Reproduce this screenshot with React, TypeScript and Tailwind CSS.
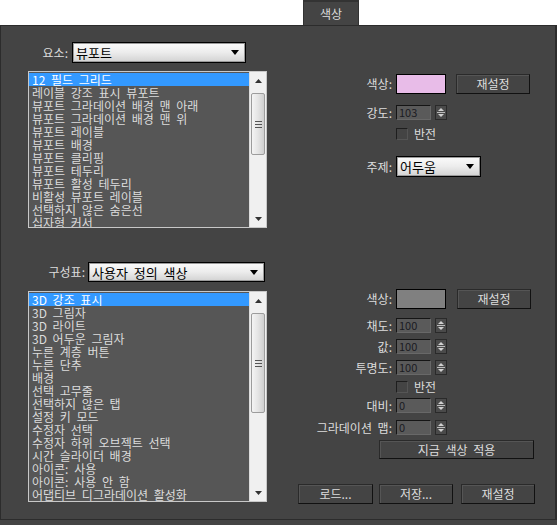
import React from "react";

const FONT = { fontFamily: '"Noto Sans CJK KR", "Noto Sans", sans-serif' };

function Dropdown({ text, w }: { text: string; w: string }) {
  return (
    <div
      className={`${w} h-full border border-black bg-gradient-to-b from-[#fbfbfb] via-[#ececec] to-[#d2d2d2] flex items-center justify-between pl-[3px] pr-[6px] shadow-[inset_0_0_0_1px_#9a9a9a]`}
    >
      <span className="text-[13px] leading-none text-black">{text}</span>
      <svg width="8" height="5" viewBox="0 0 8 5">
        <path d="M0 0 H8 L4 5 Z" fill="#000" />
      </svg>
    </div>
  );
}

function Scrollbar({ thumbTop, thumbH }: { thumbTop: number; thumbH: number }) {
  return (
    <div className="w-[17px] h-full bg-[#f0f0f0] border-l border-[#dcdcdc] flex flex-col shrink-0">
      <div className="h-[17px] flex items-center justify-center shrink-0">
        <svg width="7" height="4" viewBox="0 0 7 4">
          <path d="M0 4 H7 L3.5 0 Z" fill="#333" />
        </svg>
      </div>
      <div className="flex-1 flex flex-col px-[1px]">
        <div style={{ height: thumbTop }} className="shrink-0" />
        <div
          style={{ height: thumbH }}
          className="shrink-0 rounded-[2px] border border-[#9c9c9c] bg-gradient-to-r from-[#f4f4f4] via-[#e4e4e4] to-[#cfcfcf] flex flex-col items-center justify-center gap-[2px]"
        >
          <div className="w-[7px] h-[1px] bg-[#555]" />
          <div className="w-[7px] h-[1px] bg-[#555]" />
          <div className="w-[7px] h-[1px] bg-[#555]" />
        </div>
      </div>
      <div className="h-[17px] flex items-center justify-center shrink-0">
        <svg width="7" height="4" viewBox="0 0 7 4">
          <path d="M0 0 H7 L3.5 4 Z" fill="#333" />
        </svg>
      </div>
    </div>
  );
}

function ListBox({ items, h, thumbTop, thumbH }: { items: string[]; h: string; thumbTop: number; thumbH: number }) {
  return (
    <div className={`w-[239px] ${h} border border-[#c8c8c8] bg-[#565656] flex overflow-hidden`}>
      <div className="flex-1 flex flex-col overflow-hidden pt-[1px]">
        {items.map((t, i) => (
          <div
            key={i}
            className={`h-[13px] shrink-0 leading-[13px] text-[12px] pl-[3px] whitespace-nowrap ${
              i === 0 ? "bg-[#3399ff] text-white" : "text-[#dcdcdc]"
            }`}
          >
            {t}
          </div>
        ))}
      </div>
      <Scrollbar thumbTop={thumbTop} thumbH={thumbH} />
    </div>
  );
}

function Btn({ text, w, h = "h-[20px]" }: { text: string; w: string; h?: string }) {
  return (
    <div
      className={`${w} ${h} border border-t-[#2a2a2a] border-l-[#2a2a2a] border-b-[#111] border-r-[#111] bg-[#444] shadow-[inset_1px_1px_0_#555] flex items-center justify-center text-[12px] text-[#dcdcdc] shrink-0`}
    >
      {text}
    </div>
  );
}

function Spinner() {
  return (
    <div className="w-[12px] h-[15px] ml-[4px] border border-[#2a2a2a] bg-[#4a4a4a] flex flex-col items-center justify-center gap-[1px]">
      <svg width="6" height="3" viewBox="0 0 6 3">
        <path d="M0 3 H6 L3 0 Z" fill="#d0d0d0" />
      </svg>
      <div className="w-[8px] h-[1px] bg-[#bbb]" />
      <svg width="6" height="3" viewBox="0 0 6 3">
        <path d="M0 0 H6 L3 3 Z" fill="#d0d0d0" />
      </svg>
    </div>
  );
}

function Label({ text }: { text: string }) {
  return <div className="w-[98px] pr-[4px] text-right text-[12px] text-[#dcdcdc] leading-none shrink-0">{text}</div>;
}

function SpinRow({ label, value, mt }: { label: string; value: string; mt: string }) {
  return (
    <div className={`flex items-center h-[15px] ${mt}`}>
      <Label text={label} />
      <div className="w-[35px] h-[15px] bg-[#5a5a5a] border border-t-[#151515] border-l-[#151515] border-b-[#686868] border-r-[#686868] text-[11px] leading-[13px] text-[#1a1a22] pl-[2px]">
        {value}
      </div>
      <Spinner />
    </div>
  );
}

function CheckRow({ mt }: { mt: string }) {
  return (
    <div className={`flex items-center h-[12px] ${mt}`}>
      <div className="w-[98px] shrink-0" />
      <div className="w-[12px] h-[12px] border border-t-[#1e1e1e] border-l-[#1e1e1e] border-b-[#555] border-r-[#555] bg-[#444]" />
      <div className="ml-[6px] text-[12px] text-[#dcdcdc] leading-none">반전</div>
    </div>
  );
}

function Swatch({ color }: { color: string }) {
  return <div className={`w-[50px] h-[20px] border border-black ${color} shrink-0`} />;
}

const list1 = [
  "12 필드 그리드",
  "레이블 강조 표시 뷰포트",
  "뷰포트 그라데이션 배경 맨 아래",
  "뷰포트 그라데이션 배경 맨 위",
  "뷰포트 레이블",
  "뷰포트 배경",
  "뷰포트 클리핑",
  "뷰포트 테두리",
  "뷰포트 활성 테두리",
  "비활성 뷰포트 레이블",
  "선택하지 않은 숨은선",
  "십자형 커서",
];

const list2 = [
  "3D 강조 표시",
  "3D 그림자",
  "3D 라이트",
  "3D 어두운 그림자",
  "누른 계층 버튼",
  "누른 단추",
  "배경",
  "선택 고무줄",
  "선택하지 않은 탭",
  "설정 키 모드",
  "수정자 선택",
  "수정자 하위 오브젝트 선택",
  "시간 슬라이더 배경",
  "아이콘: 사용",
  "아이콘: 사용 안 함",
  "어댑티브 디그라데이션 활성화",
];

export default function App() {
  return (
    <div className="w-[557px] h-[525px] bg-white overflow-hidden flex flex-col [word-spacing:3px]" style={FONT}>
      <div className="h-[25px] flex shrink-0">
        <div className="ml-[303px] w-[56px] h-[25px] bg-[#444] border-t-[2px] border-x border-[#333] flex items-center justify-center text-[12px] text-[#dcdcdc]">
          색상
        </div>
      </div>
      <div className="flex-1 bg-[#444] flex flex-col">
        <div className="h-[495px] border-t border-l border-r-2 border-b border-[#2c2c2c] flex flex-col pl-[27px]">
          {/* Section 1 */}
          <div className="flex items-center h-[21px] mt-[16px]">
            <div className="w-[44px] pr-[4px] text-right text-[12px] text-[#dcdcdc] leading-none">요소:</div>
            <Dropdown text="뷰포트" w="w-[174px]" />
          </div>
          <div className="flex mt-[8px]">
            <ListBox items={list1} h="h-[157px]" thumbTop={4} thumbH={62} />
            <div className="ml-[31px] flex flex-col">
              <div className="flex items-center h-[20px] mt-[3px]">
                <Label text="색상:" />
                <Swatch color="bg-[#e8bce8]" />
                <div className="ml-[10px]">
                  <Btn text="재설정" w="w-[74px]" />
                </div>
              </div>
              <SpinRow label="강도:" value="103" mt="mt-[11px]" />
              <CheckRow mt="mt-[8px]" />
              <div className="flex items-center h-[21px] mt-[16px]">
                <Label text="주제:" />
                <Dropdown text="어두움" w="w-[85px]" />
              </div>
            </div>
          </div>

          {/* Section 2 */}
          <div className="flex items-center h-[20px] mt-[34px]">
            <div className="w-[60px] pr-[3px] text-right text-[12px] text-[#dcdcdc] leading-none">구성표:</div>
            <Dropdown text="사용자 정의 색상" w="w-[177px]" />
          </div>
          <div className="flex mt-[7px]">
            <div className="mt-[2px]">
              <ListBox items={list2} h="h-[211px]" thumbTop={4} thumbH={100} />
            </div>
            <div className="ml-[31px] flex flex-col">
              <div className="flex items-center h-[20px]">
                <Label text="색상:" />
                <Swatch color="bg-[#808080]" />
                <div className="ml-[11px]">
                  <Btn text="재설정" w="w-[74px]" />
                </div>
              </div>
              <SpinRow label="채도:" value="100" mt="mt-[9px]" />
              <SpinRow label="값:" value="100" mt="mt-[6px]" />
              <SpinRow label="투명도:" value="100" mt="mt-[6px]" />
              <CheckRow mt="mt-[6px]" />
              <SpinRow label="대비:" value="0" mt="mt-[5px]" />
              <SpinRow label="그라데이션 맵:" value="0" mt="mt-[7px]" />
              <div className="mt-[5px] ml-[81px]">
                <Btn text="지금 색상 적용" w="w-[155px]" h="h-[19px]" />
              </div>
              <div className="flex mt-[25px]">
                <Btn text="로드..." w="w-[75px]" />
                <div className="ml-[6px]">
                  <Btn text="저장..." w="w-[74px]" />
                </div>
                <div className="ml-[8px]">
                  <Btn text="재설정" w="w-[74px]" />
                </div>
              </div>
            </div>
          </div>
        </div>
      </div>
    </div>
  );
}
